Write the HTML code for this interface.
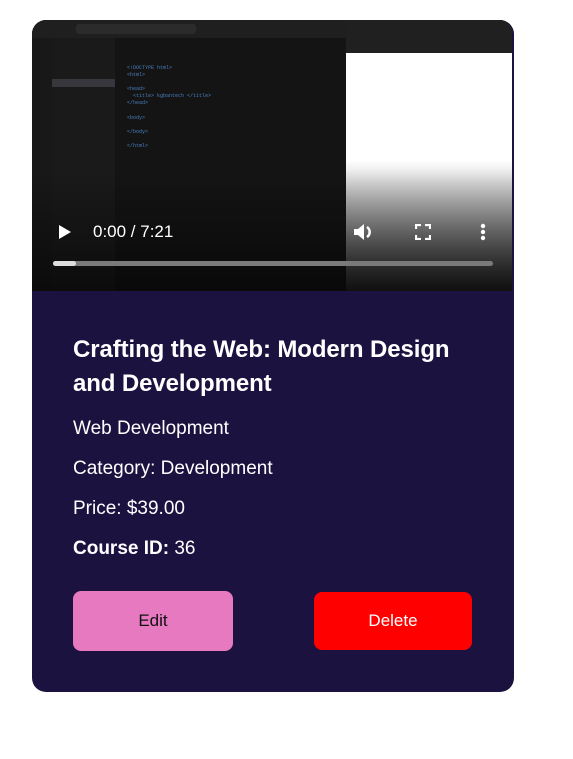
<!DOCTYPE html>
<html><head><style>
*{margin:0;padding:0;box-sizing:border-box}
body{width:573px;height:759px;background:#fff;font-family:"Liberation Sans",sans-serif;position:relative;overflow:hidden}
.card{position:absolute;left:32px;top:20px;width:482px;height:672px;background:#1b1240;border-radius:14px;overflow:hidden}
.video{position:absolute;left:0;top:0;width:480px;height:271px;background:#141414;border-radius:12px 12px 0 0;overflow:hidden}
.t{position:absolute;left:41px;color:#fff;white-space:nowrap}
.btn{position:absolute;border-radius:8px;font-size:17px;display:flex;align-items:center;justify-content:center}
</style></head><body>
<div class="card">
 <div class="video">
  <div style="position:absolute;left:0;top:0;width:480px;height:18px;background:#1f1f1f"></div>
  <div style="position:absolute;left:0;top:18px;width:20px;height:253px;background:#181818"></div>
  <div style="position:absolute;left:20px;top:18px;width:63px;height:253px;background:#1a1a1a"></div>
  <div style="position:absolute;left:20px;top:59px;width:63px;height:8px;background:#37373d"></div>
  <div style="position:absolute;left:44px;top:4px;width:120px;height:10px;background:#2b2b2b;border-radius:3px"></div>
  <div style="position:absolute;left:95px;top:45px;width:150px;font:5px 'Liberation Mono',monospace;color:#4a7fc0;line-height:7.1px">&lt;!DOCTYPE html&gt;<br>&lt;html&gt;<br><br>&lt;head&gt;<br>&nbsp;&nbsp;&lt;title&gt; kgbantech &lt;/title&gt;<br>&lt;/head&gt;<br><br>&lt;body&gt;<br><br>&lt;/body&gt;<br><br>&lt;/html&gt;</div>
  <div style="position:absolute;left:314px;top:0;width:166px;height:33px;background:#202020"></div>
  <div style="position:absolute;left:314px;top:33px;width:166px;height:238px;background:linear-gradient(#fff 0,#fff 45%,#888 75%,#222 100%)"></div>
  <div style="position:absolute;left:0;top:150px;width:480px;height:121px;background:linear-gradient(rgba(0,0,0,0),rgba(0,0,0,.55))"></div>
  <svg style="position:absolute;left:26px;top:204px" width="14" height="16"><path d="M1 1 L13 8 L1 15Z" fill="#fff"/></svg>
  <div style="position:absolute;left:61px;top:202px;color:#fff;font-size:17px">0:00 / 7:21</div>
  <svg style="position:absolute;left:320px;top:201px" width="22" height="22"><path d="M2 8h4l6-5v16l-6-5H2z" fill="#fff"/><path d="M15 6a6 6 0 0 1 0 10" stroke="#fff" stroke-width="2.5" fill="none"/></svg>
  <svg style="position:absolute;left:383px;top:204px" width="16" height="16" stroke="#fff" stroke-width="2.2" fill="none"><path d="M1 5V1h5M10 1h5v4M15 11v4h-5M6 15H1v-4"/></svg>
  <svg style="position:absolute;left:448px;top:203px" width="6" height="18" fill="#fff"><circle cx="3" cy="3" r="2.2"/><circle cx="3" cy="9" r="2.2"/><circle cx="3" cy="15" r="2.2"/></svg>
  <div style="position:absolute;left:21px;top:241px;width:440px;height:5px;background:#7a7a7a;border-radius:3px"></div>
  <div style="position:absolute;left:21px;top:241px;width:23px;height:5px;background:#ddd;border-radius:3px"></div>
 </div>
 <div class="t" style="top:313px;font-size:24px;line-height:34px;font-weight:bold;letter-spacing:-.1px">Crafting the Web: Modern Design<br>and Development</div>
 <div class="t" style="top:398px;font-size:19px">Web Development</div>
 <div class="t" style="top:438px;font-size:19px">Category: Development</div>
 <div class="t" style="top:478px;font-size:19px">Price: $39.00</div>
 <div class="t" style="top:518px;font-size:19px"><b>Course ID:</b> 36</div>
 <div class="btn" style="left:41px;top:571px;width:160px;height:60px;background:#e779c1;color:#111">Edit</div>
 <div class="btn" style="left:282px;top:572px;width:158px;height:58px;background:#ff0000;color:#fff">Delete</div>
</div>
</body></html>
